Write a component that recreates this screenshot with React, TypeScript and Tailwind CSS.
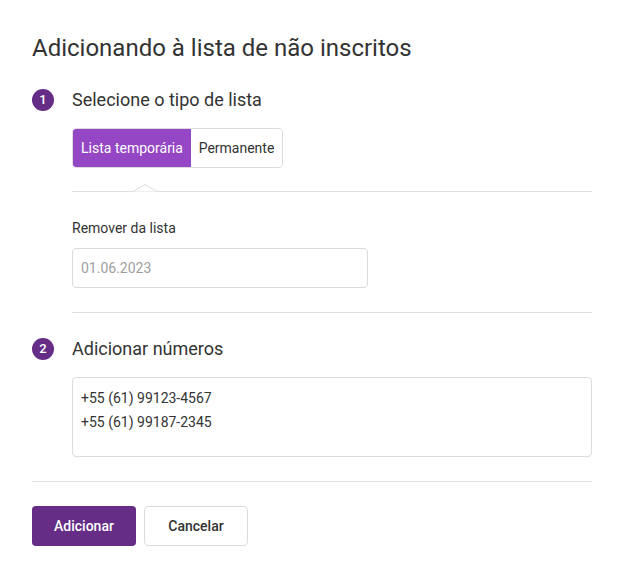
import { useState } from 'react'

const font = { fontFamily: 'Roboto, "Liberation Sans", sans-serif' }

function StepCircle({ n }: { n: number }) {
  return (
    <div className="w-[22px] h-[22px] rounded-full bg-[#652d86] text-white text-[13px] font-medium flex items-center justify-center">
      {n}
    </div>
  )
}

function NotchDivider() {
  return (
    <div className="relative mt-[23px] h-px bg-[#e0e0e0]">
      <svg className="absolute left-[61px] -top-[7px]" width="24" height="8" viewBox="0 0 24 8">
        <polygon points="0,7.5 12,0.5 24,7.5" fill="white" />
        <polyline points="0,7.5 12,0.5 24,7.5" fill="none" stroke="#dcdcdc" strokeWidth="1" />
      </svg>
    </div>
  )
}

export default function App() {
  const [listType, setListType] = useState<'temp' | 'perm'>('temp')
  const [numbers, setNumbers] = useState('+55 (61) 99123-4567\n+55 (61) 99187-2345')

  return (
    <div className="w-[624px] min-h-[578px] bg-white px-8 pt-[34px] text-[#333]" style={font}>
      <h1 className="text-[24px] leading-[28px] font-normal">Adicionando à lista de não inscritos</h1>

      {/* Passo 1 */}
      <div className="mt-[26px] flex items-center h-6">
        <div className="w-10"><StepCircle n={1} /></div>
        <h2 className="text-[18px] leading-6 font-normal">Selecione o tipo de lista</h2>
      </div>

      <div className="ml-10">
        <div className="mt-4 inline-flex h-10 rounded border border-[#dcdcdc] overflow-hidden text-[14px]">
          <button
            onClick={() => setListType('temp')}
            className={listType === 'temp' ? 'w-[118px] bg-[#9446c4] text-white' : 'w-[118px] bg-white text-[#333]'}
          >
            Lista temporária
          </button>
          <button
            onClick={() => setListType('perm')}
            className={listType === 'perm' ? 'w-[91px] bg-[#9446c4] text-white' : 'w-[91px] bg-white text-[#333]'}
          >
            Permanente
          </button>
        </div>

        <NotchDivider />

        <div className="mt-[26px] text-[14px] leading-5">Remover da lista</div>
        <input
          defaultValue=""
          placeholder="01.06.2023"
          className="mt-[10px] block w-[296px] h-10 rounded border border-[#dcdcdc] px-2 text-[14px] placeholder:text-[#9e9e9e] outline-none"
        />

        <div className="mt-6 h-px bg-[#e0e0e0]" />
      </div>

      {/* Passo 2 */}
      <div className="mt-6 flex items-center h-6">
        <div className="w-10"><StepCircle n={2} /></div>
        <h2 className="text-[18px] leading-6 font-normal">Adicionar números</h2>
      </div>

      <div className="ml-10">
        <textarea
          value={numbers}
          onChange={e => setNumbers(e.target.value)}
          className="mt-4 block w-full h-20 resize-none rounded border border-[#dcdcdc] px-2 py-2 text-[14px] leading-6 text-[#333] outline-none"
        />
      </div>

      <div className="mt-6 h-px bg-[#e0e0e0]" />

      <div className="mt-6 flex gap-2">
        <button className="w-[104px] h-10 rounded bg-[#652d86] text-white text-[14px] font-medium">Adicionar</button>
        <button className="w-[104px] h-10 rounded border border-[#dcdcdc] bg-white text-[#333] text-[14px] font-medium">Cancelar</button>
      </div>
    </div>
  )
}
